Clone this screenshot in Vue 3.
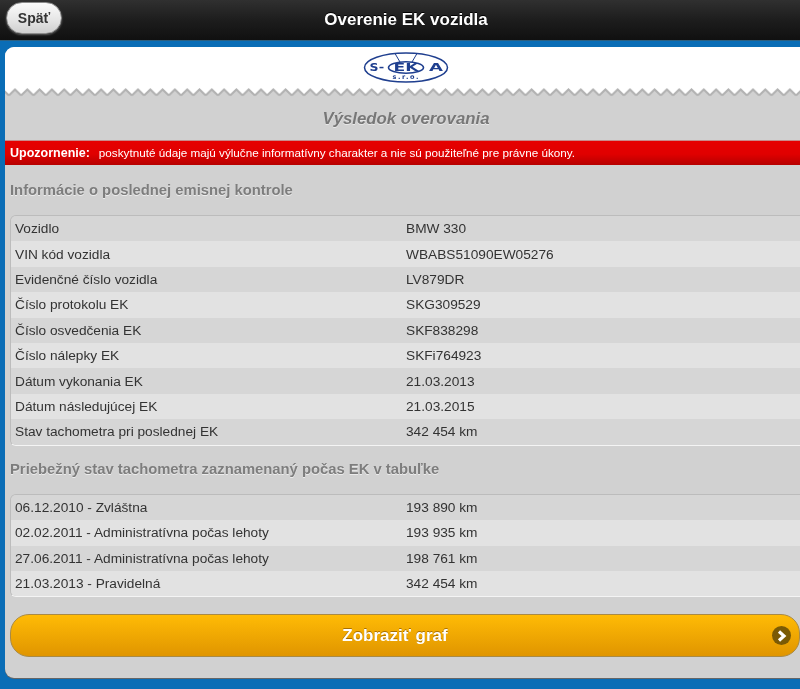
<script setup>
const info = [
  ['Vozidlo', 'BMW 330'],
  ['VIN kód vozidla', 'WBABS51090EW05276'],
  ['Evidenčné číslo vozidla', 'LV879DR'],
  ['Číslo protokolu EK', 'SKG309529'],
  ['Číslo osvedčenia EK', 'SKF838298'],
  ['Číslo nálepky EK', 'SKFi764923'],
  ['Dátum vykonania EK', '21.03.2013'],
  ['Dátum následujúcej EK', '21.03.2015'],
  ['Stav tachometra pri poslednej EK', '342 454 km'],
]
const history = [
  ['06.12.2010 - Zvláštna', '193 890 km'],
  ['02.02.2011 - Administratívna počas lehoty', '193 935 km'],
  ['27.06.2011 - Administratívna počas lehoty', '198 761 km'],
  ['21.03.2013 - Pravidelná', '342 454 km'],
]
</script>

<template>
  <div class="page">
    <header class="topbar">
      <button class="back">Späť</button>
      <h1 class="bar-title">Overenie EK vozidla</h1>
    </header>
    <main class="card">
      <div class="brand">
        <svg class="logo" width="88" height="32" viewBox="0 0 88 32">
          <ellipse cx="44" cy="15.5" rx="41.5" ry="14.5" fill="#fff" stroke="#1f3f8f" stroke-width="1.5" />
          <path d="M33 1.5 L38 10 M55 1.5 L50 10" fill="none" stroke="#1f3f8f" stroke-width="1" />
          <ellipse cx="44" cy="15.5" rx="17.5" ry="5.8" fill="#fff" stroke="#1f3f8f" stroke-width="1.6" />
          <text x="7.5" y="19.3" textLength="9" lengthAdjust="spacingAndGlyphs" class="logo-t">S</text>
          <rect x="17.5" y="14.8" width="4" height="1.5" fill="#1f3f8f" />
          <text x="31.5" y="19.3" textLength="25" lengthAdjust="spacingAndGlyphs" class="logo-t">EK</text>
          <text x="67" y="19.3" textLength="14" lengthAdjust="spacingAndGlyphs" class="logo-t">A</text>
          <text x="30.5" y="27.4" textLength="26" class="logo-s">s.r.o.</text>
        </svg>
        <svg class="zigzag" width="800" height="10">
          <defs>
            <pattern id="teeth" width="12.3" height="10" patternUnits="userSpaceOnUse" x="3.85">
              <path d="M0 8.5 L6.15 2.5 L12.3 8.5 L12.3 10 L0 10 Z" fill="#d1d1d1" />
              <path d="M0 8.5 L6.15 2.5 L12.3 8.5" fill="none" stroke="#b2b2b2" stroke-width="2" />
            </pattern>
          </defs>
          <rect width="800" height="10" fill="url(#teeth)" />
        </svg>
      </div>
      <h2 class="result-title">Výsledok overovania</h2>
      <div class="alert">
        <strong>Upozornenie:</strong>
        <span class="alert-text">poskytnuté údaje majú výlučne informatívny charakter a nie sú použiteľné pre právne úkony.</span>
      </div>
      <h3 class="section first">Informácie o poslednej emisnej kontrole</h3>
      <div class="table">
        <div v-for="row in info" :key="row[0]" class="row">
          <span class="label">{{ row[0] }}</span>
          <span>{{ row[1] }}</span>
        </div>
      </div>
      <h3 class="section second">Priebežný stav tachometra zaznamenaný počas EK v tabuľke</h3>
      <div class="table">
        <div v-for="row in history" :key="row[0]" class="row">
          <span class="label">{{ row[0] }}</span>
          <span>{{ row[1] }}</span>
        </div>
      </div>
      <button class="cta">
        <span class="cta-label">Zobraziť graf</span>
        <span class="cta-icon">
          <svg width="10" height="12" viewBox="0 0 10 12">
            <path d="M2 1.5 L7 6 L2 10.5" fill="none" stroke="#fff" stroke-width="3.2" />
          </svg>
        </span>
      </button>
    </main>
  </div>
</template>

<style>
html, body { margin: 0; background: #0a6cb4; }
</style>

<style scoped>
.page {
  width: 800px;
  height: 689px;
  overflow: hidden;
  background: #0a6db6;
  font-family: "Liberation Sans", Arial, sans-serif;
  display: flex;
  flex-direction: column;
  filter: blur(.3px);
}
.topbar {
  height: 41px;
  flex: none;
  box-sizing: border-box;
  position: relative;
  display: flex;
  align-items: center;
  justify-content: center;
  padding-left: 12px;
  background: linear-gradient(#303030, #1d1d1d 50%, #101010);
  border-bottom: 1px solid #2c5f80;
}
.back {
  position: absolute;
  left: 6px;
  top: 2px;
  width: 56px;
  height: 32px;
  padding: 0;
  border: 1px solid #8c8c8c;
  border-radius: 16px;
  background: linear-gradient(#fbfbfb, #e6e6e6 55%, #cfcfcf);
  box-shadow: 0 1px 2px rgba(255, 255, 255, .3);
  color: #333;
  font: bold 14px "Liberation Sans", Arial, sans-serif;
}
.bar-title {
  margin: 0;
  color: #fff;
  font-size: 17px;
  font-weight: bold;
  text-shadow: 0 -1px 0 #000;
}
.card {
  flex: none;
  margin: 6px -20px 0 5px;
  height: 631px;
  box-sizing: border-box;
  overflow: hidden;
  background: #d1d1d1;
  border-radius: 9px;
  box-shadow: 0 1px 0 #666;
}
.brand {
  height: 50px;
  position: relative;
  background: #fff;
}
.logo {
  position: absolute;
  left: 357px;
  top: 5px;
}
.logo-t {
  font: bold 10.5px "DejaVu Sans", sans-serif;
  fill: #1f3f8f;
}
.logo-s {
  font: bold 6.5px "DejaVu Sans", sans-serif;
  fill: #1f3f8f;
}
.zigzag {
  position: absolute;
  left: 0;
  bottom: 0;
}
.result-title {
  margin: 0;
  height: 43px;
  width: 802px;
  box-sizing: border-box;
  text-align: center;
  line-height: 44px;
  font-size: 16.8px;
  font-style: italic;
  font-weight: bold;
  color: #777;
  text-shadow: 0 1px 0 #e8e8e8;
}
.alert {
  height: 25px;
  box-sizing: border-box;
  display: flex;
  align-items: center;
  gap: 9px;
  padding-left: 5px;
  color: #fff;
  font-size: 11.7px;
  background: linear-gradient(#e60000, #e00000 55%, #b60000);
  border-top: 1px solid #c98a8a;
}
.alert strong { font-size: 12.5px; }
.alert-text { margin-top: -1px; }
.section {
  margin: 0;
  padding-left: 5px;
  font-size: 14.8px;
  font-weight: bold;
  color: #7d7d7d;
  text-shadow: 0 1px 0 #ececec;
}
.section.first { padding-top: 17px; height: 33px; line-height: 16px; }
.section.second { padding-top: 15.4px; height: 33px; line-height: 16px; }
.table {
  margin-left: 5px;
  border: 1px solid #bcbcbc;
  border-bottom: 1px solid #f4f4f4;
  border-radius: 6px 0 0 6px;
  overflow: hidden;
}
.row {
  height: 25.4px;
  display: flex;
  align-items: center;
  padding-left: 4px;
  color: #333;
  font-size: 13.7px;
  background: #d6d6d6;
}
.row:nth-child(even) { background: #e2e2e2; }
.label { width: 391px; flex: none; }
.cta {
  margin: 17px 0 0 5px;
  width: 790px;
  height: 43px;
  padding: 1px 20px 0 0;
  position: relative;
  display: flex;
  align-items: center;
  justify-content: center;
  border: 1px solid #a98a45;
  border-radius: 19px;
  background: linear-gradient(#ffbb05, #e09500);
  color: #fff;
  font: bold 17px "Liberation Sans", Arial, sans-serif;
  text-shadow: 0 -1px 0 #a87000;
}
.cta-icon {
  position: absolute;
  right: 8px;
  top: 11px;
  width: 19px;
  height: 19px;
  border-radius: 50%;
  background: #7a5a05;
  display: flex;
  align-items: center;
  justify-content: center;
}
</style>
